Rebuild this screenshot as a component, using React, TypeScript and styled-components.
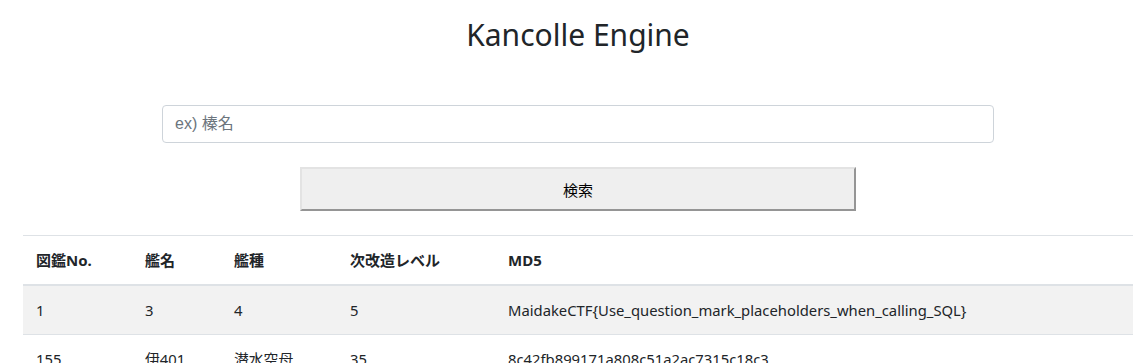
import React from "react";
import styled, { createGlobalStyle } from "styled-components";

const Global = createGlobalStyle`
  html, body { margin: 0; padding: 0; background: #fff; }
  body {
    font-family: "Noto Sans", "Noto Sans CJK JP", sans-serif;
    font-size: 16px;
    line-height: 1.5;
    color: #212529;
  }
`;

const Page = styled.div`
  width: 1110px;
  margin-left: 23px;
  display: flex;
  flex-direction: column;
  align-items: center;
`;

const Title = styled.h1`
  margin: 13px 0 0;
  height: 43px;
  font-family: "Noto Sans", sans-serif;
  font-weight: 400;
  font-size: 30px;
  line-height: 43px;
  color: #212529;
`;

const SearchForm = styled.form`
  width: 100%;
  margin-top: 49px;
  display: flex;
  flex-direction: column;
  align-items: center;
`;

const Input = styled.input`
  box-sizing: border-box;
  width: 832px;
  height: 38px;
  padding: 6px 12px;
  border: 1px solid #ced4da;
  border-radius: 4px;
  font-family: "Liberation Sans", "Noto Sans CJK JP", sans-serif;
  font-size: 16px;
  color: #495057;
  outline: none;
  &::placeholder { color: #6c757d; }
`;

const Button = styled.button`
  box-sizing: border-box;
  margin-top: 24px;
  width: 556px;
  height: 44px;
  background: #efefef;
  border: 2px solid;
  border-color: #e3e3e3 #959595 #959595 #e3e3e3;
  font-family: "Noto Sans CJK JP", sans-serif;
  font-size: 15px;
  color: #000;
  padding: 0;
`;

const Table = styled.table`
  width: 100%;
  margin-top: 24px;
  border-collapse: collapse;
  table-layout: fixed;
`;

const Col = styled.col<{ $w: number }>`
  width: ${(p) => p.$w}px;
`;

const Th = styled.th`
  text-align: left;
  font-family: "Noto Sans", "Noto Sans CJK JP", sans-serif;
  font-weight: 700;
  font-size: 15px;
  line-height: 24px;
  padding: 12px 12px 12px 13px;
  border-top: 1px solid #dee2e6;
  border-bottom: 2px solid #dee2e6;
  white-space: nowrap;
`;

const Tr = styled.tr<{ $striped?: boolean }>`
  background: ${(p) => (p.$striped ? "#f2f2f2" : "transparent")};
`;

const Td = styled.td`
  font-family: "Noto Sans", "Noto Sans CJK JP", sans-serif;
  font-size: 14.8px;
  line-height: 24px;
  padding: 12px 12px 12px 13px;
  border-bottom: 1px solid #dee2e6;
  white-space: nowrap;
`;

const rows = [
  ["1", "3", "4", "5", "MaidakeCTF{Use_question_mark_placeholders_when_calling_SQL}"],
  ["155", "伊401", "潜水空母", "35", "8c42fb899171a808c51a2ac7315c18c3"],
];

export default function App() {
  return (
    <>
      <Global />
      <Page>
        <Title>Kancolle Engine</Title>
        <SearchForm onSubmit={(e) => e.preventDefault()}>
          <Input placeholder="ex) 榛名" />
          <Button type="submit">検索</Button>
        </SearchForm>
        <Table>
          <colgroup>
            <Col $w={109} />
            <Col $w={89} />
            <Col $w={116} />
            <Col $w={158} />
            <Col $w={638} />
          </colgroup>
          <thead>
            <tr>
              <Th>図鑑No.</Th>
              <Th>艦名</Th>
              <Th>艦種</Th>
              <Th>次改造レベル</Th>
              <Th>MD5</Th>
            </tr>
          </thead>
          <tbody>
            {rows.map((r, i) => (
              <Tr key={i} $striped={i % 2 === 0}>
                {r.map((c, j) => (
                  <Td key={j}>{c}</Td>
                ))}
              </Tr>
            ))}
          </tbody>
        </Table>
      </Page>
    </>
  );
}
